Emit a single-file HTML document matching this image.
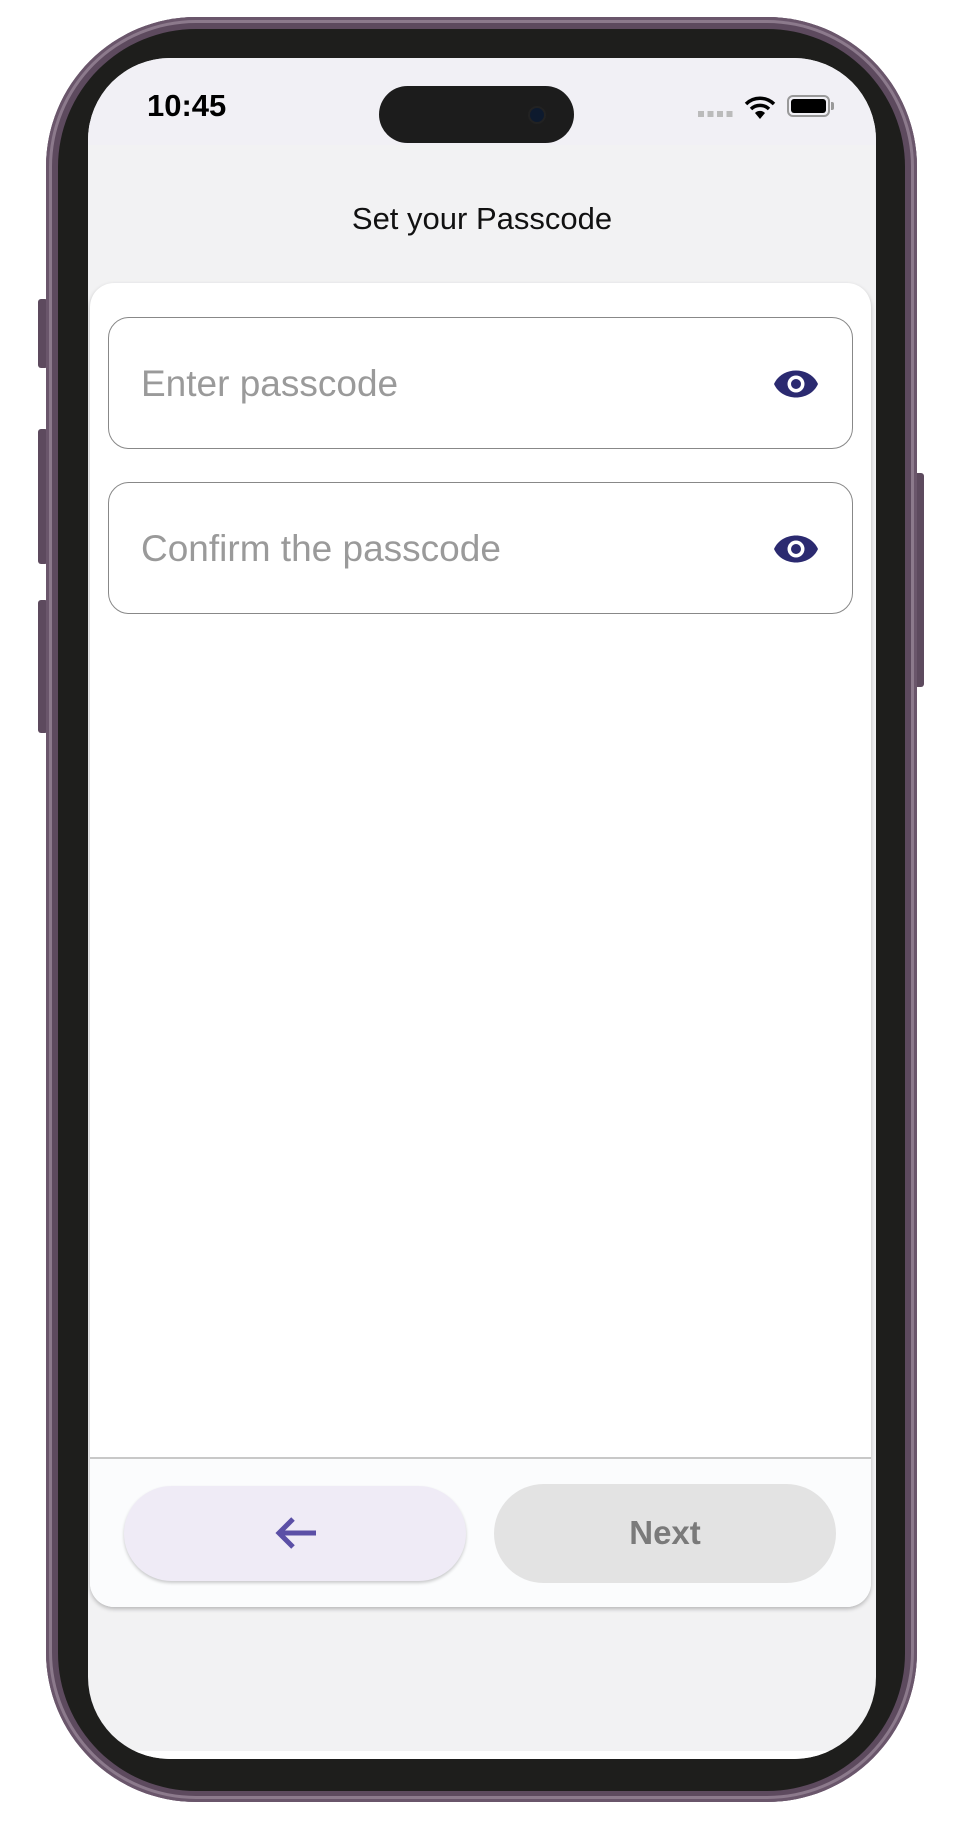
<!DOCTYPE html>
<html><head><meta charset="utf-8"><style>
*{margin:0;padding:0;box-sizing:border-box}
body{width:957px;height:1825px;background:#fff;position:relative;overflow:hidden;font-family:"Liberation Sans",sans-serif}
.abs{position:absolute}
.frame{left:46px;top:17px;width:871px;height:1785px;border-radius:150px;background:#5d4a5e;box-shadow:inset 0 0 0 3px #6a566b,inset 0 0 0 6px #8c7a8c}
.bezel{left:58px;top:29px;width:847px;height:1762px;border-radius:138px;background:#1e1e1c}
.screen{left:88px;top:58px;width:788px;height:1701px;border-radius:82px;background:#f2f2f3;overflow:hidden}
.btn{background:#5d4a5e;border-radius:3px}
</style></head><body>
<div class="abs btn" style="left:38px;top:299px;width:10px;height:69px"></div>
<div class="abs btn" style="left:38px;top:429px;width:10px;height:135px"></div>
<div class="abs btn" style="left:38px;top:600px;width:10px;height:133px"></div>
<div class="abs btn" style="left:913px;top:473px;width:11px;height:214px"></div>
<div class="abs frame"></div>
<div class="abs bezel"></div>
<div class="abs screen">
  <div class="abs" style="left:0;top:0;width:788px;height:87px;background:#f1f0f5"></div>
  <div class="abs" style="left:0;top:1693px;width:788px;height:20px;background:#fff"></div>
  <div class="abs" style="left:59px;top:30px;font-size:31px;font-weight:bold;color:#000">10:45</div>
  <div class="abs" style="left:291px;top:28px;width:195px;height:57px;border-radius:29px;background:#1c1c1c"></div>
  <div class="abs" style="left:440px;top:48px;width:18px;height:18px;border-radius:50%;background:#0d1a2e;border:2px solid #222"></div>
  <div class="abs" style="left:610px;top:53px;width:35px;height:6px;background:repeating-linear-gradient(90deg,#bbb 0 6px,transparent 6px 9.5px)"></div>
  <svg class="abs" style="left:656px;top:38px" width="32" height="24" viewBox="0 0 32 24"><path d="M2 8 A20 20 0 0 1 30 8" stroke="#000" stroke-width="3.5" fill="none"/><path d="M7 13 A13 13 0 0 1 25 13" stroke="#000" stroke-width="3.5" fill="none"/><path d="M11 17 L16 23 L21 17 A7 7 0 0 0 11 17Z" fill="#000"/></svg>
  <div class="abs" style="left:699px;top:37px;width:43px;height:22px;border:2px solid #999;border-radius:6px;padding:2px"><div style="width:100%;height:100%;background:#000;border-radius:3px"></div></div>
  <div class="abs" style="left:743px;top:44px;width:3px;height:8px;background:#999;border-radius:0 2px 2px 0"></div>
  <div class="abs" style="left:0;top:143px;width:788px;text-align:center;font-size:31px;color:#111">Set your Passcode</div>
  <div class="abs" style="left:2px;top:225px;width:781px;height:1324px;border-radius:24px;background:#fff;box-shadow:0 2px 4px rgba(0,0,0,.25);overflow:hidden">
    <div class="abs" style="left:0;top:1174px;width:781px;height:150px;background:#fbfcfd;border-top:2px solid #c8c8c8"></div>
    <div class="abs" style="left:18px;top:34px;width:745px;height:132px;border:1.5px solid #888;border-radius:21px"></div>
    <div class="abs" style="left:51px;top:80px;font-size:37px;color:#9a9a9a">Enter passcode</div>
    <div class="abs" style="left:18px;top:199px;width:745px;height:132px;border:1.5px solid #888;border-radius:21px"></div>
    <div class="abs" style="left:51px;top:245px;font-size:37px;color:#9a9a9a">Confirm the passcode</div>
    <svg class="abs" style="left:683px;top:85px" width="46" height="32" viewBox="0 0 46 32"><path d="M1 16 C9 -2 37 -2 45 16 C37 34 9 34 1 16Z" fill="#2b2a70"/><circle cx="23" cy="16" r="8.5" fill="#fff"/><circle cx="23" cy="16" r="5" fill="#2b2a70"/></svg>
    <svg class="abs" style="left:683px;top:250px" width="46" height="32" viewBox="0 0 46 32"><path d="M1 16 C9 -2 37 -2 45 16 C37 34 9 34 1 16Z" fill="#2b2a70"/><circle cx="23" cy="16" r="8.5" fill="#fff"/><circle cx="23" cy="16" r="5" fill="#2b2a70"/></svg>
    <div class="abs" style="left:34px;top:1203px;width:342px;height:95px;border-radius:48px;background:#efebf6;box-shadow:0 2px 3px rgba(0,0,0,.2)"></div>
    <svg class="abs" style="left:184px;top:1233px" width="44" height="34" viewBox="0 0 44 34"><path d="M42 17 H6 M19 3 L5 17 L19 31" stroke="#5b4fa6" stroke-width="5" fill="none"/></svg>
    <div class="abs" style="left:404px;top:1201px;width:342px;height:99px;border-radius:50px;background:#e3e3e3"></div>
    <div class="abs" style="left:404px;top:1231px;width:342px;text-align:center;font-size:33px;font-weight:bold;color:#7a7a7a">Next</div>
  </div>
</div>
</body></html>
